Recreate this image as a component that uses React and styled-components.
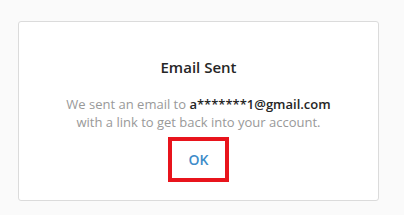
import React from 'react';
import styled, { createGlobalStyle } from 'styled-components';

const GlobalStyle = createGlobalStyle`
  html, body {
    margin: 0;
    padding: 0;
    background: #fafafa;
  }
  body {
    font-family: 'Open Sans', 'Noto Sans', sans-serif;
  }
`;

const Page = styled.div`
  box-sizing: border-box;
  width: 404px;
  height: 215px;
  padding: 21px 25px 14px 18px;
`;

const Card = styled.div`
  box-sizing: border-box;
  height: 180px;
  background: #ffffff;
  border: 1px solid #dbdbdb;
  border-radius: 3px;
  display: flex;
  flex-direction: column;
  align-items: center;
  padding-top: 34px;
`;

const Title = styled.h2`
  margin: 0;
  font-size: 15px;
  font-weight: 600;
  color: #262626;
  line-height: 22px;
`;

const Message = styled.p`
  margin: 17px 0 0;
  font-size: 13px;
  line-height: 18px;
  color: #999999;
  text-align: center;
`;

const Email = styled.strong`
  font-weight: 600;
  color: #262626;
`;

const OkButton = styled.button`
  box-sizing: border-box;
  margin-top: 6px;
  width: 61px;
  height: 45px;
  border: 4px solid #e8141c;
  background: #ffffff;
  color: #3d8cc9;
  font-family: inherit;
  font-size: 14px;
  font-weight: 600;
  padding: 0;
  cursor: pointer;
`;

export default function App() {
  return (
    <>
      <GlobalStyle />
      <Page>
        <Card>
          <Title>Email Sent</Title>
          <Message>
            We sent an email to <Email>a*******1@gmail.com</Email>
            <br />
            with a link to get back into your account.
          </Message>
          <OkButton>OK</OkButton>
        </Card>
      </Page>
    </>
  );
}
